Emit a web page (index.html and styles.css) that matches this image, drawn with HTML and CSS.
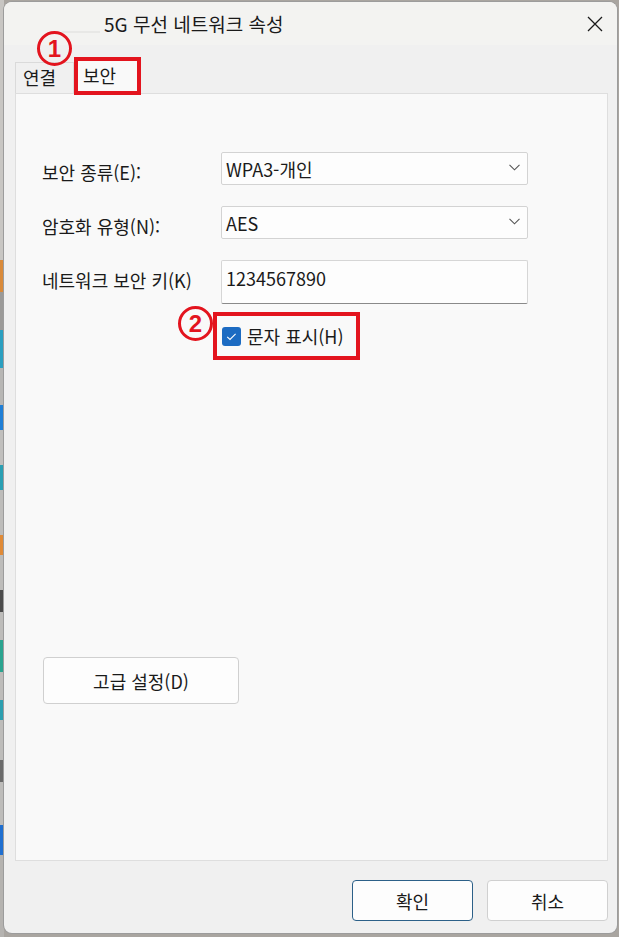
FILE: index.html
```html
<!DOCTYPE html>
<html lang="ko">
<head>
<meta charset="utf-8">
<title>5G 무선 네트워크 속성</title>
<link rel="stylesheet" href="styles.css">
</head>
<body>
<div class="window">
  <div class="titlebar">
    <span class="ghost"></span>
    <span class="title">5G 무선 네트워크 속성</span>
    <svg class="close" width="16" height="16" viewBox="0 0 16 16"><path d="M1 1 L15 15 M15 1 L1 15" stroke="#1b1b1b" stroke-width="1.3" fill="none"/></svg>
  </div>
  <div class="content">
    <div class="tabs">
      <div class="tab">연결</div>
      <div class="tab active">보안</div>
      <span class="badge badge-1">1</span>
    </div>
    <div class="panel">
      <div class="form">
        <label class="label">보안 종류(E):</label>
        <div class="select"><span>WPA3-개인</span><svg class="chev" width="11" height="7" viewBox="0 0 11 7"><path d="M0.5 0.8 L5.5 5.8 L10.5 0.8" stroke="#555" stroke-width="1.1" fill="none"/></svg></div>
        <label class="label">암호화 유형(N):</label>
        <div class="select"><span>AES</span><svg class="chev" width="11" height="7" viewBox="0 0 11 7"><path d="M0.5 0.8 L5.5 5.8 L10.5 0.8" stroke="#555" stroke-width="1.1" fill="none"/></svg></div>
        <label class="label">네트워크 보안 키(K)</label>
        <div class="input">1234567890</div>
      </div>
      <div class="check-wrap">
        <div class="check-row">
          <span class="checkbox"><svg width="19" height="19" viewBox="0 0 19 19"><path d="M5.2 9.8 L8 12.4 L13.6 6.8" stroke="#fff" stroke-width="1.1" fill="none"/></svg></span>
          <span>문자 표시(H)</span>
          <span class="badge badge-2">2</span>
        </div>
      </div>
      <button class="btn adv">고급 설정(D)</button>
    </div>
    <div class="actions">
      <button class="btn ok">확인</button>
      <button class="btn">취소</button>
    </div>
  </div>
</div>
</body>
</html>
```
FILE: styles.css
```css
html, body {
  margin: 0;
}
body {
  width: 619px;
  height: 937px;
  overflow: hidden;
  box-sizing: border-box;
  padding: 2px 0 0 4px;
  background-color: #a9a5a0;
  background-image: linear-gradient(to bottom,
    #c8c6c3 0 260px, #d98a3a 260px 292px, #9b9a98 292px 330px, #2b9fc0 330px 368px,
    #b7b6b4 368px 405px, #1f7fd6 405px 430px, #c0bfbd 430px 465px, #2a9fb3 465px 490px,
    #bdbcba 490px 535px, #e08a36 535px 555px, #bdbcba 555px 590px, #4b4b4b 590px 612px,
    #bdbcba 612px 640px, #2aa38f 640px 672px, #bdbcba 672px 700px, #2c9fb0 700px 720px,
    #bdbcba 720px 760px, #6a6a6a 760px 782px, #bdbcba 782px 825px, #1f6fd0 825px 855px,
    #b5b3b0 855px 937px);
  background-size: 4px 100%;
  background-repeat: no-repeat;
  font-family: "Noto Sans CJK KR", "Noto Sans", sans-serif;
  color: #1a1a1a;
}
.window {
  width: 613px;
  height: 931px;
  border-radius: 8px;
  background: #f0f0f0;
  box-shadow: 0 0 0 1px #9c9c9c;
  display: flex;
  flex-direction: column;
  overflow: hidden;
}
.titlebar {
  height: 43px;
  flex: none;
  background: #f3f3f1;
  display: flex;
  align-items: center;
  padding-left: 58px;
}
.ghost {
  width: 38px;
  height: 2px;
  background: #e8e8e6;
  align-self: flex-end;
  margin-bottom: 12px;
  margin-right: 4px;
}
.title {
  font-size: 19px;
  line-height: 24px;
  color: #1a1a1a;
}
.close {
  margin-left: auto;
  margin-right: 14px;
}
.content {
  flex: 1;
  display: flex;
  flex-direction: column;
  padding: 0 9px 12px 11px;
  min-height: 0;
}
.tabs {
  height: 48px;
  flex: none;
  display: flex;
  align-items: flex-end;
  position: relative;
}
.tab {
  box-sizing: border-box;
  height: 31px;
  width: 59px;
  border: 1px solid #dadada;
  border-bottom: none;
  font-size: 18px;
  line-height: 28px;
  padding-left: 7px;
  background: #f0f0f0;
}
.tab.active {
  width: 67px;
  height: 38px;
  border: 4px solid #e3141e;
  background: #f9f9f9;
  margin-bottom: -2px;
  position: relative;
  z-index: 2;
  padding-left: 5px;
  line-height: 28px;
}
.badge {
  position: absolute;
  box-sizing: border-box;
  width: 35px;
  height: 35px;
  border: 3px solid #e3141e;
  border-radius: 50%;
  color: #e3141e;
  font-family: "Liberation Sans", sans-serif;
  font-weight: bold;
  font-size: 24px;
  display: flex;
  align-items: center;
  justify-content: center;
  z-index: 3;
}
.badge-1 {
  left: 22px;
  top: -14px;
}
.badge-2 {
  left: -39px;
  top: -10px;
}
.panel {
  flex: 1;
  background: #f9f9f9;
  border: 1px solid #dedede;
  padding: 58px 0 0 26px;
  position: relative;
  z-index: 1;
}
.form {
  display: grid;
  grid-template-columns: 179px 307px;
  row-gap: 21px;
}
.label {
  font-size: 18px;
  line-height: 24px;
  padding-top: 8px;
}
.select {
  box-sizing: border-box;
  height: 33px;
  background: #fdfdfd;
  border: 1px solid #d3d3d3;
  border-radius: 2px;
  display: flex;
  align-items: center;
  padding: 0 7px 0 4px;
  font-size: 18px;
  line-height: 24px;
}
.chev {
  margin-left: auto;
  margin-top: -2px;
}
.input {
  box-sizing: border-box;
  height: 44px;
  background: #fdfdfd;
  border: 1px solid #d6d6d6;
  border-bottom-color: #8a8a8a;
  border-radius: 2px;
  padding: 5px 4px 0;
  font-size: 18px;
  line-height: 24px;
}
.check-wrap {
  margin-top: 8px;
  padding-left: 171px;
}
.check-row {
  position: relative;
  box-sizing: border-box;
  display: inline-flex;
  align-items: center;
  gap: 6px;
  height: 48px;
  border: 4px solid #e3141e;
  padding: 0 12px 0 5px;
  font-size: 18px;
  line-height: 24px;
}
.checkbox {
  width: 19px;
  height: 19px;
  border-radius: 3px;
  background: #1c6bc2;
  display: flex;
}
.btn {
  box-sizing: border-box;
  font-family: "Noto Sans CJK KR", "Noto Sans", sans-serif;
  font-size: 18px;
  line-height: 24px;
  color: #1a1a1a;
  background: #fdfdfd;
  border: 1px solid #d0d0d0;
  border-radius: 4px;
  padding: 0;
}
.adv {
  display: block;
  margin: 297px 0 0 1px;
  width: 196px;
  height: 47px;
}
.actions {
  flex: none;
  display: flex;
  justify-content: flex-end;
  gap: 14px;
  padding-top: 19px;
}
.actions .btn {
  width: 121px;
  height: 41px;
}
.actions .ok {
  border-color: #2c6088;
}
```
